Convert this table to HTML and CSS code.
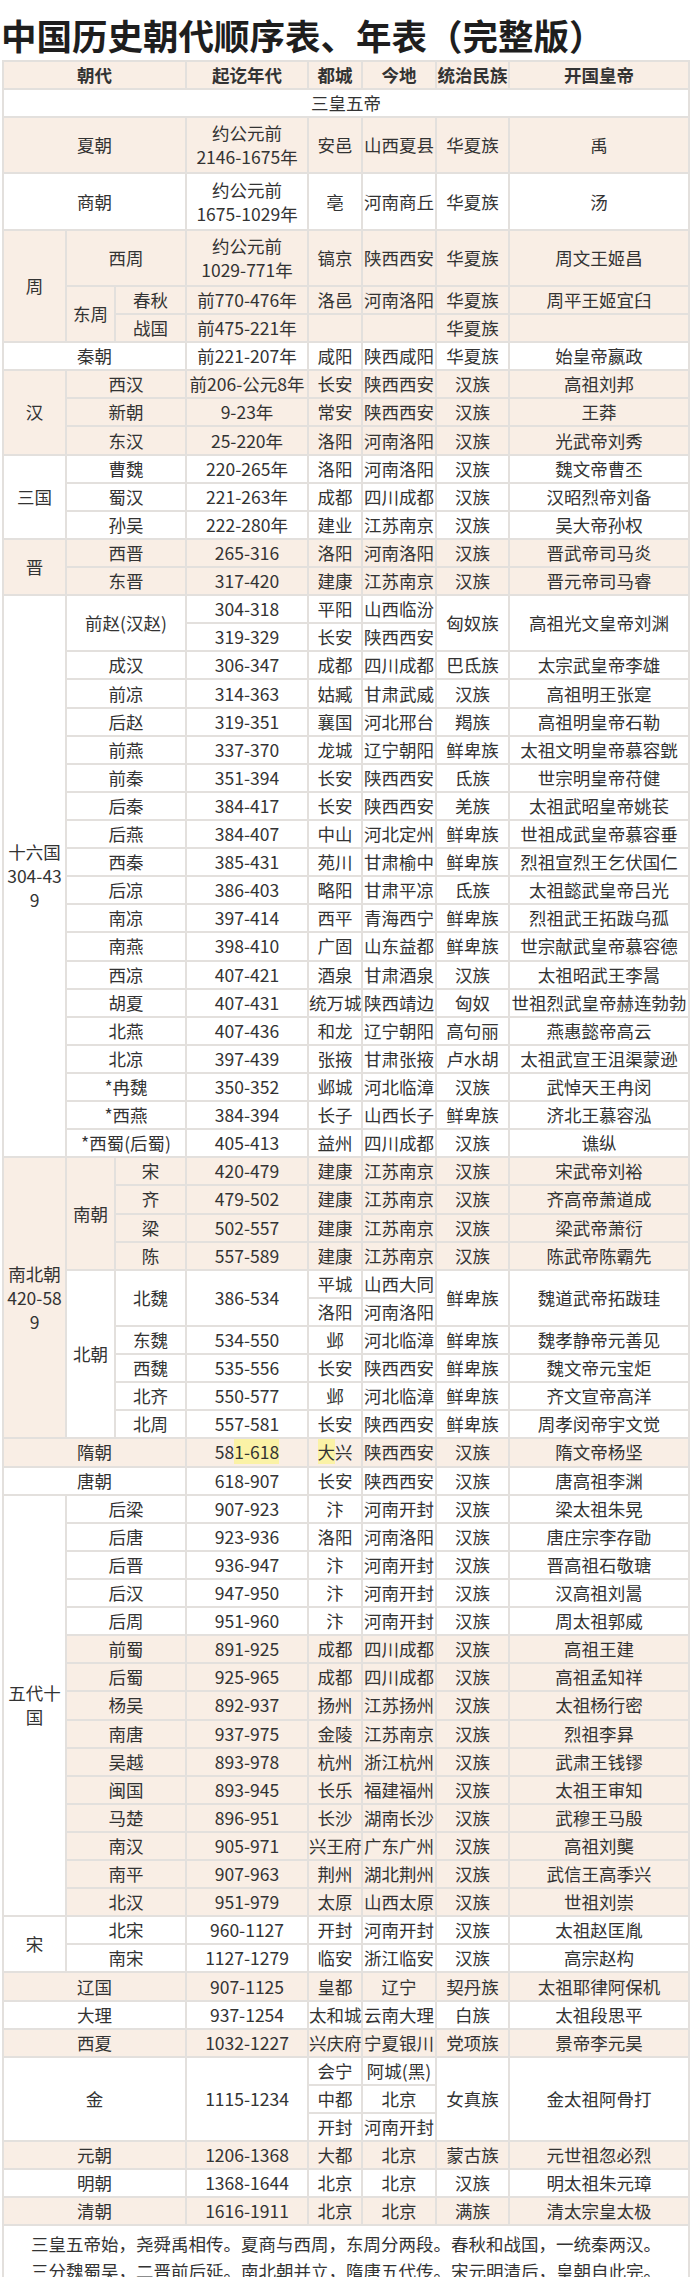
FILE: index.html
```html
<!DOCTYPE html>
<html lang="zh-CN">
<head>
<meta charset="utf-8">
<title>中国历史朝代顺序表、年表（完整版）</title>
<link rel="stylesheet" href="styles.css">
</head>
<body>
<h1 class="title">中国历史朝代顺序表、年表（完整版）</h1>
<table class="tbl">
<colgroup>
<col class="c1"><col class="c2"><col class="c3"><col class="c4"><col class="c5"><col class="c6"><col class="c7"><col class="c8">
</colgroup>
<tbody>
<tr class="b hd"><th colspan="3">朝代</th><th>起讫年代</th><th>都城</th><th>今地</th><th>统治民族</th><th>开国皇帝</th></tr>
<tr><td colspan="8">三皇五帝</td></tr>
<tr class="b r2"><td colspan="3">夏朝</td><td>约公元前<br>2146-1675年</td><td>安邑</td><td>山西夏县</td><td>华夏族</td><td>禹</td></tr>
<tr class="r2"><td colspan="3">商朝</td><td>约公元前<br>1675-1029年</td><td>亳</td><td>河南商丘</td><td>华夏族</td><td>汤</td></tr>
<tr class="b r2"><td rowspan="3">周</td><td colspan="2">西周</td><td>约公元前<br>1029-771年</td><td>镐京</td><td>陕西西安</td><td>华夏族</td><td>周文王姬昌</td></tr>
<tr class="b"><td rowspan="2">东周</td><td>春秋</td><td>前770-476年</td><td>洛邑</td><td>河南洛阳</td><td>华夏族</td><td>周平王姬宜臼</td></tr>
<tr class="b"><td>战国</td><td>前475-221年</td><td></td><td></td><td>华夏族</td><td></td></tr>
<tr><td colspan="3">秦朝</td><td>前221-207年</td><td>咸阳</td><td>陕西咸阳</td><td>华夏族</td><td>始皇帝嬴政</td></tr>
<tr class="b"><td rowspan="3">汉</td><td colspan="2">西汉</td><td>前206-公元8年</td><td>长安</td><td>陕西西安</td><td>汉族</td><td>高祖刘邦</td></tr>
<tr class="b"><td colspan="2">新朝</td><td>9-23年</td><td>常安</td><td>陕西西安</td><td>汉族</td><td>王莽</td></tr>
<tr class="b"><td colspan="2">东汉</td><td>25-220年</td><td>洛阳</td><td>河南洛阳</td><td>汉族</td><td>光武帝刘秀</td></tr>
<tr><td rowspan="3">三国</td><td colspan="2">曹魏</td><td>220-265年</td><td>洛阳</td><td>河南洛阳</td><td>汉族</td><td>魏文帝曹丕</td></tr>
<tr><td colspan="2">蜀汉</td><td>221-263年</td><td>成都</td><td>四川成都</td><td>汉族</td><td>汉昭烈帝刘备</td></tr>
<tr><td colspan="2">孙吴</td><td>222-280年</td><td>建业</td><td>江苏南京</td><td>汉族</td><td>吴大帝孙权</td></tr>
<tr class="b"><td rowspan="2">晋</td><td colspan="2">西晋</td><td>265-316</td><td>洛阳</td><td>河南洛阳</td><td>汉族</td><td>晋武帝司马炎</td></tr>
<tr class="b"><td colspan="2">东晋</td><td>317-420</td><td>建康</td><td>江苏南京</td><td>汉族</td><td>晋元帝司马睿</td></tr>
<tr><td rowspan="20" class="ml">十六国<br>304-43<br>9</td><td colspan="2" rowspan="2">前赵(汉赵)</td><td>304-318</td><td>平阳</td><td>山西临汾</td><td rowspan="2">匈奴族</td><td rowspan="2">高祖光文皇帝刘渊</td></tr>
<tr><td>319-329</td><td>长安</td><td>陕西西安</td></tr>
<tr><td colspan="2">成汉</td><td>306-347</td><td>成都</td><td>四川成都</td><td>巴氐族</td><td>太宗武皇帝李雄</td></tr>
<tr><td colspan="2">前凉</td><td>314-363</td><td>姑臧</td><td>甘肃武威</td><td>汉族</td><td>高祖明王张寔</td></tr>
<tr><td colspan="2">后赵</td><td>319-351</td><td>襄国</td><td>河北邢台</td><td>羯族</td><td>高祖明皇帝石勒</td></tr>
<tr><td colspan="2">前燕</td><td>337-370</td><td>龙城</td><td>辽宁朝阳</td><td>鲜卑族</td><td>太祖文明皇帝慕容皝</td></tr>
<tr><td colspan="2">前秦</td><td>351-394</td><td>长安</td><td>陕西西安</td><td>氐族</td><td>世宗明皇帝苻健</td></tr>
<tr><td colspan="2">后秦</td><td>384-417</td><td>长安</td><td>陕西西安</td><td>羌族</td><td>太祖武昭皇帝姚苌</td></tr>
<tr><td colspan="2">后燕</td><td>384-407</td><td>中山</td><td>河北定州</td><td>鲜卑族</td><td>世祖成武皇帝慕容垂</td></tr>
<tr><td colspan="2">西秦</td><td>385-431</td><td>苑川</td><td>甘肃榆中</td><td>鲜卑族</td><td>烈祖宣烈王乞伏国仁</td></tr>
<tr><td colspan="2">后凉</td><td>386-403</td><td>略阳</td><td>甘肃平凉</td><td>氐族</td><td>太祖懿武皇帝吕光</td></tr>
<tr><td colspan="2">南凉</td><td>397-414</td><td>西平</td><td>青海西宁</td><td>鲜卑族</td><td>烈祖武王拓跋乌孤</td></tr>
<tr><td colspan="2">南燕</td><td>398-410</td><td>广固</td><td>山东益都</td><td>鲜卑族</td><td>世宗献武皇帝慕容德</td></tr>
<tr><td colspan="2">西凉</td><td>407-421</td><td>酒泉</td><td>甘肃酒泉</td><td>汉族</td><td>太祖昭武王李暠</td></tr>
<tr><td colspan="2">胡夏</td><td>407-431</td><td>统万城</td><td>陕西靖边</td><td>匈奴</td><td>世祖烈武皇帝赫连勃勃</td></tr>
<tr><td colspan="2">北燕</td><td>407-436</td><td>和龙</td><td>辽宁朝阳</td><td>高句丽</td><td>燕惠懿帝高云</td></tr>
<tr><td colspan="2">北凉</td><td>397-439</td><td>张掖</td><td>甘肃张掖</td><td>卢水胡</td><td>太祖武宣王沮渠蒙逊</td></tr>
<tr><td colspan="2">*冉魏</td><td>350-352</td><td>邺城</td><td>河北临漳</td><td>汉族</td><td>武悼天王冉闵</td></tr>
<tr><td colspan="2">*西燕</td><td>384-394</td><td>长子</td><td>山西长子</td><td>鲜卑族</td><td>济北王慕容泓</td></tr>
<tr><td colspan="2">*西蜀(后蜀)</td><td>405-413</td><td>益州</td><td>四川成都</td><td>汉族</td><td>谯纵</td></tr>
<tr class="b"><td rowspan="10" class="ml">南北朝<br>420-58<br>9</td><td rowspan="4">南朝</td><td>宋</td><td>420-479</td><td>建康</td><td>江苏南京</td><td>汉族</td><td>宋武帝刘裕</td></tr>
<tr class="b"><td>齐</td><td>479-502</td><td>建康</td><td>江苏南京</td><td>汉族</td><td>齐高帝萧道成</td></tr>
<tr class="b"><td>梁</td><td>502-557</td><td>建康</td><td>江苏南京</td><td>汉族</td><td>梁武帝萧衍</td></tr>
<tr class="b"><td>陈</td><td>557-589</td><td>建康</td><td>江苏南京</td><td>汉族</td><td>陈武帝陈霸先</td></tr>
<tr class="w"><td rowspan="6">北朝</td><td rowspan="2">北魏</td><td rowspan="2">386-534</td><td>平城</td><td>山西大同</td><td rowspan="2">鲜卑族</td><td rowspan="2">魏道武帝拓跋珪</td></tr>
<tr class="w"><td>洛阳</td><td>河南洛阳</td></tr>
<tr class="w"><td>东魏</td><td>534-550</td><td>邺</td><td>河北临漳</td><td>鲜卑族</td><td>魏孝静帝元善见</td></tr>
<tr class="w"><td>西魏</td><td>535-556</td><td>长安</td><td>陕西西安</td><td>鲜卑族</td><td>魏文帝元宝炬</td></tr>
<tr class="w"><td>北齐</td><td>550-577</td><td>邺</td><td>河北临漳</td><td>鲜卑族</td><td>齐文宣帝高洋</td></tr>
<tr class="w"><td>北周</td><td>557-581</td><td>长安</td><td>陕西西安</td><td>鲜卑族</td><td>周孝闵帝宇文觉</td></tr>
<tr class="b"><td colspan="3">隋朝</td><td>58<span class="hl">1-618</span></td><td><span class="hl">大</span>兴</td><td>陕西西安</td><td>汉族</td><td>隋文帝杨坚</td></tr>
<tr><td colspan="3">唐朝</td><td>618-907</td><td>长安</td><td>陕西西安</td><td>汉族</td><td>唐高祖李渊</td></tr>
<tr><td rowspan="15" class="ml">五代十<br>国</td><td colspan="2">后梁</td><td>907-923</td><td>汴</td><td>河南开封</td><td>汉族</td><td>梁太祖朱晃</td></tr>
<tr><td colspan="2">后唐</td><td>923-936</td><td>洛阳</td><td>河南洛阳</td><td>汉族</td><td>唐庄宗李存勖</td></tr>
<tr><td colspan="2">后晋</td><td>936-947</td><td>汴</td><td>河南开封</td><td>汉族</td><td>晋高祖石敬瑭</td></tr>
<tr><td colspan="2">后汉</td><td>947-950</td><td>汴</td><td>河南开封</td><td>汉族</td><td>汉高祖刘暠</td></tr>
<tr><td colspan="2">后周</td><td>951-960</td><td>汴</td><td>河南开封</td><td>汉族</td><td>周太祖郭威</td></tr>
<tr class="b"><td colspan="2">前蜀</td><td>891-925</td><td>成都</td><td>四川成都</td><td>汉族</td><td>高祖王建</td></tr>
<tr class="b"><td colspan="2">后蜀</td><td>925-965</td><td>成都</td><td>四川成都</td><td>汉族</td><td>高祖孟知祥</td></tr>
<tr class="b"><td colspan="2">杨吴</td><td>892-937</td><td>扬州</td><td>江苏扬州</td><td>汉族</td><td>太祖杨行密</td></tr>
<tr class="b"><td colspan="2">南唐</td><td>937-975</td><td>金陵</td><td>江苏南京</td><td>汉族</td><td>烈祖李昪</td></tr>
<tr class="b"><td colspan="2">吴越</td><td>893-978</td><td>杭州</td><td>浙江杭州</td><td>汉族</td><td>武肃王钱镠</td></tr>
<tr class="b"><td colspan="2">闽国</td><td>893-945</td><td>长乐</td><td>福建福州</td><td>汉族</td><td>太祖王审知</td></tr>
<tr class="b"><td colspan="2">马楚</td><td>896-951</td><td>长沙</td><td>湖南长沙</td><td>汉族</td><td>武穆王马殷</td></tr>
<tr class="b"><td colspan="2">南汉</td><td>905-971</td><td>兴王府</td><td>广东广州</td><td>汉族</td><td>高祖刘龑</td></tr>
<tr class="b"><td colspan="2">南平</td><td>907-963</td><td>荆州</td><td>湖北荆州</td><td>汉族</td><td>武信王高季兴</td></tr>
<tr class="b"><td colspan="2">北汉</td><td>951-979</td><td>太原</td><td>山西太原</td><td>汉族</td><td>世祖刘崇</td></tr>
<tr><td rowspan="2">宋</td><td colspan="2">北宋</td><td>960-1127</td><td>开封</td><td>河南开封</td><td>汉族</td><td>太祖赵匡胤</td></tr>
<tr><td colspan="2">南宋</td><td>1127-1279</td><td>临安</td><td>浙江临安</td><td>汉族</td><td>高宗赵构</td></tr>
<tr class="b"><td colspan="3">辽国</td><td>907-1125</td><td>皇都</td><td>辽宁</td><td>契丹族</td><td>太祖耶律阿保机</td></tr>
<tr><td colspan="3">大理</td><td>937-1254</td><td>太和城</td><td>云南大理</td><td>白族</td><td>太祖段思平</td></tr>
<tr class="b"><td colspan="3">西夏</td><td>1032-1227</td><td>兴庆府</td><td>宁夏银川</td><td>党项族</td><td>景帝李元昊</td></tr>
<tr><td colspan="3" rowspan="3">金</td><td rowspan="3">1115-1234</td><td>会宁</td><td>阿城(黑)</td><td rowspan="3">女真族</td><td rowspan="3">金太祖阿骨打</td></tr>
<tr><td>中都</td><td>北京</td></tr>
<tr><td>开封</td><td>河南开封</td></tr>
<tr class="b"><td colspan="3">元朝</td><td>1206-1368</td><td>大都</td><td>北京</td><td>蒙古族</td><td>元世祖忽必烈</td></tr>
<tr><td colspan="3">明朝</td><td>1368-1644</td><td>北京</td><td>北京</td><td>汉族</td><td>明太祖朱元璋</td></tr>
<tr class="b"><td colspan="3">清朝</td><td>1616-1911</td><td>北京</td><td>北京</td><td>满族</td><td>清太宗皇太极</td></tr>
<tr class="poem"><td colspan="8">三皇五帝始，尧舜禹相传。夏商与西周，东周分两段。春秋和战国，一统秦两汉。<br>三分魏蜀吴，二晋前后延。南北朝并立，隋唐五代传。宋元明清后，皇朝自此完。</td></tr>
</tbody>
</table>
</body>
</html>
```

FILE: styles.css
```css
html, body {
  margin: 0;
  padding: 0;
  background: #ffffff;
}

body {
  font-family: "Noto Sans CJK SC", "Noto Sans", sans-serif;
  color: #333333;
  width: 690px;
}

.title {
  margin: 0;
  height: 60px;
  box-sizing: border-box;
  padding: 12px 0 0 1px;
  font-size: 35.5px;
  line-height: 46px;
  font-weight: 700;
  color: #1e1e1e;
  white-space: nowrap;
}

.tbl {
  margin-left: 2px;
  width: 686px;
  table-layout: fixed;
  border-collapse: collapse;
  font-size: 17.5px;
  line-height: 24px;
}

.c1 { width: 63px; }
.c2 { width: 49px; }
.c3 { width: 71px; }
.c4 { width: 122px; }
.c5 { width: 54px; }
.c6 { width: 74px; }
.c7 { width: 73px; }
.c8 { width: 180px; }

.tbl tr {
  height: 28.12px;
}

.tbl tr.r2 {
  height: 56.24px;
}

.tbl td, .tbl th {
  border: 2px solid #e3e0dd;
  padding: 0;
  text-align: center;
  vertical-align: middle;
  white-space: nowrap;
}

.tbl th {
  font-weight: 700;
  color: #333333;
}

.tbl tr.b > td, .tbl tr.b > th {
  background: #f9eee5;
}

.tbl tr.w > td {
  background: #ffffff;
}

.tbl td.ml {
  line-height: 24px;
}

.hl {
  background: #fbf2a6;
}

.tbl tr.poem {
  height: 52px;
}

.tbl tr.poem td {
  line-height: 27px;
  padding-top: 4px;
  vertical-align: top;
  border-bottom: none;
}
```
